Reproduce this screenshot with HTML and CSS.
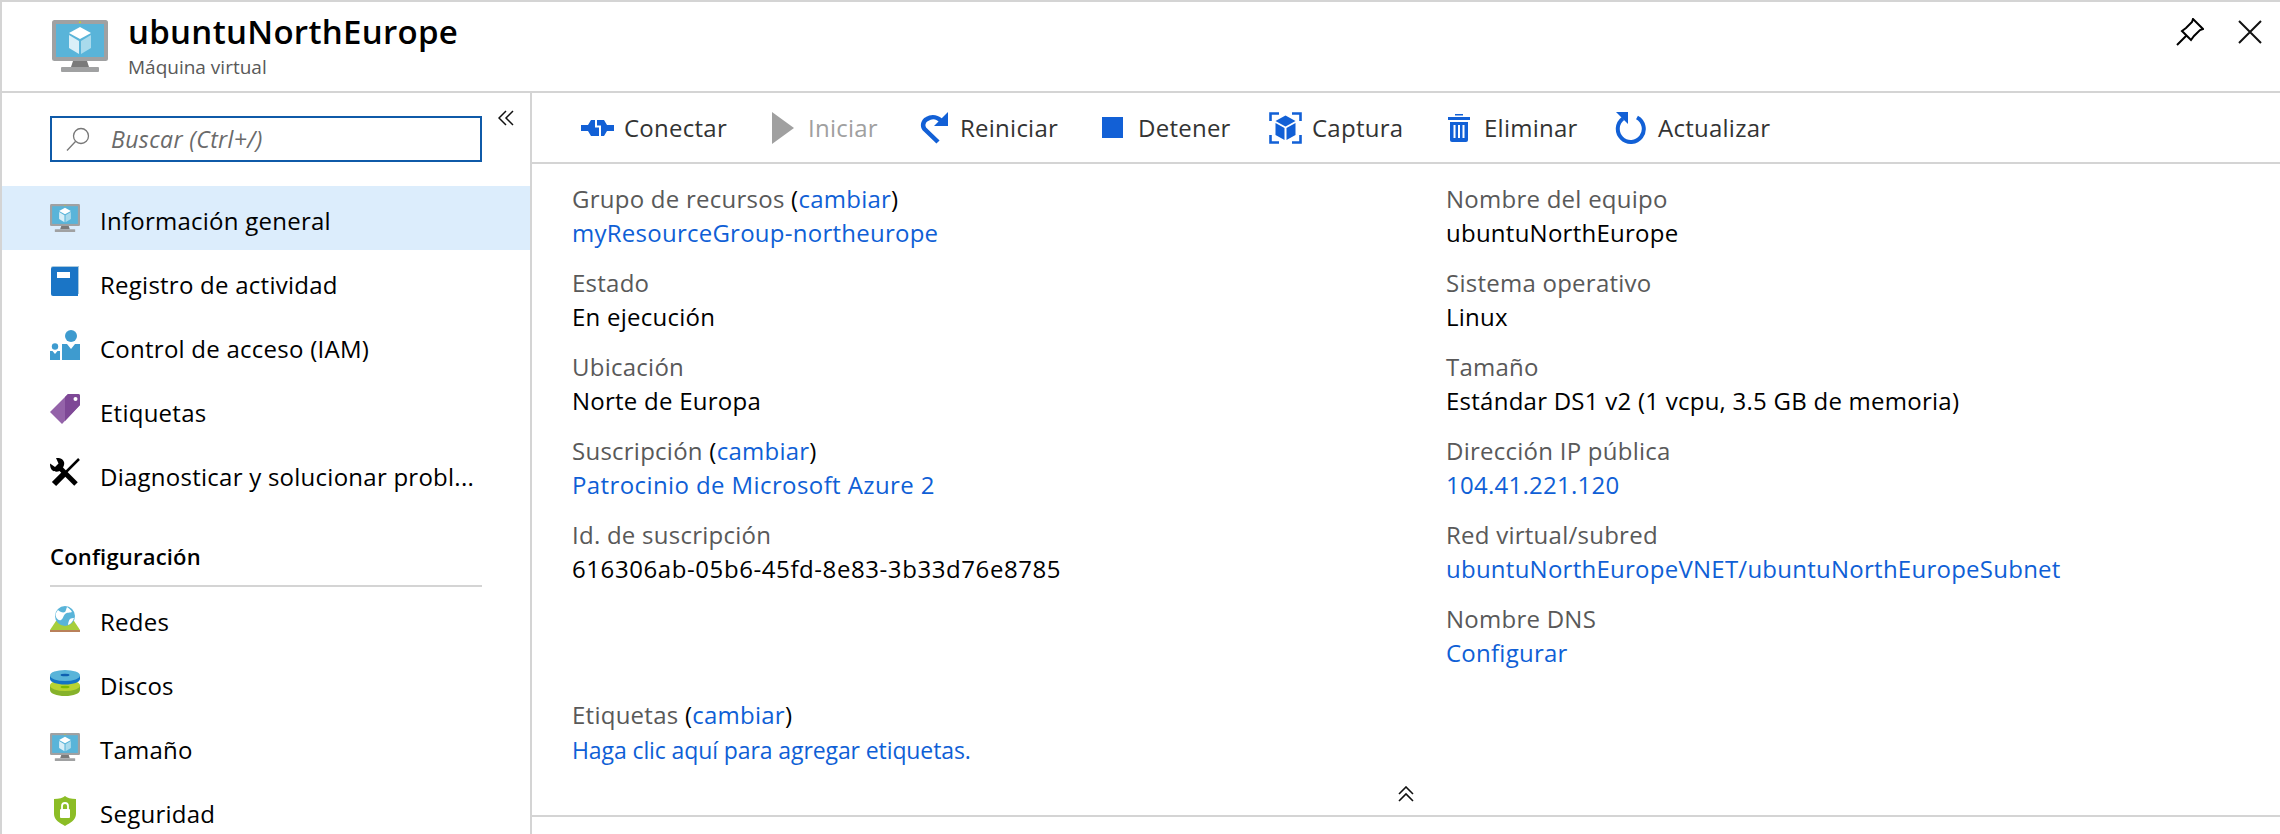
FILE: index.html
```html
<!DOCTYPE html>
<html lang="es">
<head>
<meta charset="utf-8">
<title>ubuntuNorthEurope</title>
<link rel="stylesheet" href="styles.css">
</head>
<body>
<svg class="defs" width="0" height="0" aria-hidden="true">
  <symbol id="vm" viewBox="0 0 56 52">
    <rect x="0" y="0" width="56" height="41" rx="2.5" fill="#a0a1a2"/>
    <rect x="4" y="4" width="48" height="33" fill="#59b4d9"/>
    <path d="M21 41h14l2 6H19z" fill="#7a7a7a"/>
    <rect x="9" y="47" width="38" height="5" rx="1" fill="#a0a1a2"/>
    <rect x="27" y="1.500" width="2" height="1.500" fill="#b8d432"/>
    <path d="M28 7l11 6-11 6-11-6z" fill="#fff"/>
    <path d="M17 15l10 6v13l-10-6z" fill="#d9eff8"/>
    <path d="M29 21l10-6v13l-10 6z" fill="#a9daec"/>
  </symbol>
  <symbol id="book" viewBox="0 0 30 30">
    <path d="M1 2a2 2 0 0 1 2-2h26v28H3a2 2 0 0 1-2-2z" fill="#a9c9dd"/>
    <path d="M1 3a2 2 0 0 1 2-2h25v29H3a2 2 0 0 1-2-2z" fill="#1a75c6"/>
    <rect x="7" y="6" width="13" height="6" fill="#fff"/>
  </symbol>
  <symbol id="iam" viewBox="0 0 30 30">
    <circle cx="21" cy="6" r="6" fill="#3e9bcf"/>
    <path d="M12 14h5l4 5 4-5h5v16H12z" fill="#3e9bcf"/>
    <circle cx="5" cy="16.500" r="3.200" fill="#3e9bcf"/>
    <path d="M0 21h2.500L5 24l2.500-3H10v9H0z" fill="#3e9bcf"/>
  </symbol>
  <symbol id="tag" viewBox="0 0 30 30">
    <path d="M0 18L18 0h10a2 2 0 0 1 2 2v9L12 30z" fill="#9463a9"/>
    <path d="M15 3L18 0h10a2 2 0 0 1 2 2v9L15 27z" fill="#7e4896"/>
    <circle cx="25.500" cy="5" r="2" fill="#fff"/>
  </symbol>
  <symbol id="tools" viewBox="0 0 30 30">
    <path d="M29 1L15 15" stroke="#000" stroke-width="2.500" fill="none"/>
    <path d="M15 15L4 26" stroke="#000" stroke-width="6" fill="none"/>
    <path d="M9 9l17 17" stroke="#000" stroke-width="5" fill="none"/>
    <path d="M6 0c4-.5 7 1 8 4 .5 2 0 4-1 5.500L9.500 13c-2 1-5 1-7-.5C.5 11 0 8 0 5.500l5 3.500 3.500-3.500z" fill="#000"/>
  </symbol>
  <symbol id="net" viewBox="0 0 30 26">
    <path d="M6 15h18l6 9H0z" fill="#a7ce3c"/>
    <rect x="0" y="24" width="30" height="2" fill="#b9805a"/>
    <circle cx="15" cy="10" r="10" fill="#59b4d9"/>
    <path d="M8 4c2 2 5 3 7 2 1-1 1-3 2-5 2 1 4 3 5 5-2 1-5 0-7 2s-2 5-4 6-4-1-5-3c-1-2 0-5 2-7zM20 13c1-1 3-1 4-1-1 3-3 6-6 7 0-2 1-5 2-6z" fill="#fff"/>
  </symbol>
  <symbol id="disk" viewBox="0 0 30 26">
    <path d="M0 15v5c0 3.500 6.500 6 15 6s15-2.500 15-6v-5z" fill="#86b22b"/>
    <ellipse cx="15" cy="15.500" rx="15" ry="5.500" fill="#b8d432"/>
    <ellipse cx="15" cy="17" rx="4.500" ry="1.300" fill="#7fba00"/>
    <path d="M0 6v3c0 3 6.500 5.500 15 5.500s15-2.500 15-5.500V6z" fill="#1474c4"/>
    <ellipse cx="15" cy="5.500" rx="15" ry="5.500" fill="#59b4d9"/>
    <ellipse cx="15" cy="5" rx="4.500" ry="1.300" fill="#0f5fb0"/>
  </symbol>
  <symbol id="shield" viewBox="0 0 22 30">
    <path d="M11 0c2 2 6 3 11 3v15c0 6-6 9-11 12C6 27 0 24 0 18V3c5 0 9-1 11-3z" fill="#8cbd26"/>
    <rect x="6" y="13" width="10" height="9" rx="1" fill="#fff"/>
    <path d="M8 13V10a3 3 0 0 1 6 0v3" fill="none" stroke="#fff" stroke-width="1.800"/>
  </symbol>
</svg>

<div class="blade">
  <header class="blade-head">
    <svg class="head-icon"><use href="#vm"/></svg>
    <div class="head-titles">
      <h1 class="head-title">ubuntuNorthEurope</h1>
      <p class="head-sub">Máquina virtual</p>
    </div>
    <div class="head-actions">
      <svg class="pin" viewBox="0 0 28 28"><path d="M1 27l9-9M6 13l4-3 6-6 1-3 10 10-3 1-6 6-3 4z" fill="none" stroke="#000" stroke-width="2" stroke-linejoin="miter"/></svg>
      <svg class="close" viewBox="0 0 24 24"><path d="M1 1l22 22M23 1L1 23" fill="none" stroke="#111" stroke-width="2"/></svg>
    </div>
  </header>

  <div class="blade-body">
    <aside class="sidebar">
      <div class="search">
        <svg class="search-icon" viewBox="0 0 24 24"><circle cx="15" cy="9" r="7.500" fill="none" stroke="#777" stroke-width="1.300"/><path d="M9.500 14.500L1 23.500" stroke="#777" stroke-width="1.300"/></svg>
        <span class="search-text">Buscar (Ctrl+/)</span>
      </div>
      <svg class="collapse" viewBox="0 0 16 16"><path d="M8 1L1 8l7 7M15 1L8 8l7 7" fill="none" stroke="#111" stroke-width="1.500"/></svg>
      <nav class="nav">
        <a class="nav-item active"><svg class="nav-icon"><use href="#vm"/></svg><span>Información general</span></a>
        <a class="nav-item"><svg class="nav-icon nudge-up"><use href="#book"/></svg><span>Registro de actividad</span></a>
        <a class="nav-item"><svg class="nav-icon nudge-up"><use href="#iam"/></svg><span>Control de acceso (IAM)</span></a>
        <a class="nav-item"><svg class="nav-icon nudge-up"><use href="#tag"/></svg><span>Etiquetas</span></a>
        <a class="nav-item"><svg class="nav-icon nudge-up"><use href="#tools"/></svg><span>Diagnosticar y solucionar probl...</span></a>
        <div class="nav-section"><span>Configuración</span></div>
        <a class="nav-item"><svg class="nav-icon"><use href="#net"/></svg><span>Redes</span></a>
        <a class="nav-item"><svg class="nav-icon"><use href="#disk"/></svg><span>Discos</span></a>
        <a class="nav-item"><svg class="nav-icon"><use href="#vm"/></svg><span>Tamaño</span></a>
        <a class="nav-item"><svg class="nav-icon"><use href="#shield"/></svg><span>Seguridad</span></a>
      </nav>
    </aside>

    <main class="main">
      <div class="toolbar">
        <a class="tool t-connect"><svg class="ti" width="33" height="16" viewBox="0 0 33 16"><path d="M0 5h7l3-5h13l3 5h7v6h-7l-3 5H10l-3-5H0z" fill="#1260d6"/><path d="M15 0v6.500h4V16" fill="none" stroke="#fff" stroke-width="2"/></svg><span>Conectar</span></a>
        <a class="tool disabled t-start"><svg class="ti" width="22" height="32" viewBox="0 0 22 32"><path d="M0 0l22 16L0 32z" fill="#a0a0a0"/></svg><span>Iniciar</span></a>
        <a class="tool t-restart"><svg class="ti" width="28" height="32" viewBox="0 0 28 32"><path d="M18 30L4.500 17C2 14 3 9 7 7c5-3 11-2 15 3" fill="none" stroke="#1260d6" stroke-width="4.500"/><path d="M28 0v14H14z" fill="#1260d6"/></svg><span>Reiniciar</span></a>
        <a class="tool t-stop"><span class="stop-square"></span><span>Detener</span></a>
        <a class="tool t-capture"><svg class="ti" width="33" height="32" viewBox="0 0 33 32"><path d="M1.500 9V1.500H10M23 1.500h8.500V9M31.500 23v7.500H23M10 30.500H1.500V23" fill="none" stroke="#1260d6" stroke-width="2.600"/><path d="M16.500 3.500l10 5.500-10 5.500-10-5.500z" fill="#1260d6"/><path d="M6.500 11l9 5v12l-9-5zM26.500 11l-9 5v12l9-5z" fill="#1260d6"/></svg><span>Captura</span></a>
        <a class="tool t-delete"><svg class="ti" width="22" height="28" viewBox="0 0 22 28"><path d="M7 0h8v1.500H7zM0 3h22v3H0z" fill="#1260d6"/><path d="M2 8h18v18a2 2 0 0 1-2 2H4a2 2 0 0 1-2-2z" fill="#1260d6"/><path d="M6.500 11v13M11 11v13M15.500 11v13" stroke="#fff" stroke-width="2"/></svg><span>Eliminar</span></a>
        <a class="tool t-refresh"><svg class="ti" width="31" height="32" viewBox="0 0 31 32"><path d="M22 5.500a13 13 0 1 1-14 1" fill="none" stroke="#1260d6" stroke-width="4"/><path d="M1 0h12v12z" fill="#1260d6"/></svg><span>Actualizar</span></a>
      </div>

      <section class="essentials">
        <div class="columns">
          <dl class="col">
            <div class="field"><dt class="label">Grupo de recursos <span class="plain">(<a class="link">cambiar</a>)</span></dt><dd class="value"><a class="link">myResourceGroup-northeurope</a></dd></div>
            <div class="field"><dt class="label">Estado</dt><dd class="value">En ejecución</dd></div>
            <div class="field"><dt class="label">Ubicación</dt><dd class="value">Norte de Europa</dd></div>
            <div class="field"><dt class="label">Suscripción <span class="plain">(<a class="link">cambiar</a>)</span></dt><dd class="value"><a class="link wide">Patrocinio de Microsoft Azure 2</a></dd></div>
            <div class="field"><dt class="label">Id. de suscripción</dt><dd class="value guid">616306ab-05b6-45fd-8e83-3b33d76e8785</dd></div>
          </dl>
          <dl class="col">
            <div class="field"><dt class="label">Nombre del equipo</dt><dd class="value">ubuntuNorthEurope</dd></div>
            <div class="field"><dt class="label">Sistema operativo</dt><dd class="value">Linux</dd></div>
            <div class="field"><dt class="label">Tamaño</dt><dd class="value">Estándar DS1 v2 (1 vcpu, 3.5 GB de memoria)</dd></div>
            <div class="field"><dt class="label">Dirección IP pública</dt><dd class="value"><a class="link">104.41.221.120</a></dd></div>
            <div class="field"><dt class="label">Red virtual/subred</dt><dd class="value"><a class="link">ubuntuNorthEuropeVNET/ubuntuNorthEuropeSubnet</a></dd></div>
            <div class="field"><dt class="label">Nombre DNS</dt><dd class="value"><a class="link">Configurar</a></dd></div>
          </dl>
        </div>
        <div class="tags">
          <div class="label">Etiquetas <span class="plain">(<a class="link">cambiar</a>)</span></div>
          <div class="value small"><a class="link">Haga clic aquí para agregar etiquetas.</a></div>
        </div>
        <div class="fold">
          <svg class="fold-icon" viewBox="0 0 16 16"><path d="M1 8l7-7 7 7M1 15l7-7 7 7" fill="none" stroke="#111" stroke-width="1.600"/></svg>
        </div>
      </section>
    </main>
  </div>
</div>
</body>
</html>
```
FILE: styles.css
```css
* { box-sizing: border-box; }
html, body { margin: 0; padding: 0; background: #fff; }
body {
  font-family: "Open Sans", "Noto Sans", sans-serif;
  color: #000;
  overflow: hidden;
}
.defs { position: absolute; }
.blade {
  height: 834px;
  overflow: hidden;
  border-top: 2px solid #d4d4d4;
  border-left: 2px solid #d4d4d4;
  display: flex;
  flex-direction: column;
}
.blade-head {
  height: 91px;
  flex: none;
  border-bottom: 2px solid #d4d4d4;
  display: flex;
  align-items: flex-start;
  padding-left: 50px;
}
.head-icon { width: 56px; height: 52px; margin-top: 18px; flex: none; }
.head-titles { margin-left: 20px; padding-top: 8px; }
.head-title {
  margin: 0;
  font-size: 33px;
  line-height: 44px;
  font-weight: 600;
  letter-spacing: 0.3px;
}
.head-sub {
  margin: 0;
  font-size: 19px;
  line-height: 26px;
  color: #595959;
}
.head-actions {
  margin-left: auto;
  display: flex;
  align-items: flex-start;
  gap: 34px;
  padding: 16px 18px 0 0;
}
.pin { width: 28px; height: 28px; }
.close { width: 24px; height: 24px; margin-top: 2px; }

.blade-body { flex: 1; display: flex; min-height: 0; }
.sidebar {
  width: 530px;
  flex: none;
  border-right: 2px solid #d4d4d4;
  position: relative;
}
.search {
  margin: 23px 48px 0;
  height: 46px;
  border: 2px solid #0f5aa8;
  display: flex;
  align-items: center;
  padding-left: 14px;
  width: 432px;
}
.search-icon { width: 24px; height: 24px; flex: none; }
.search-text {
  margin-left: 21px;
  font-size: 23px;
  font-style: italic;
  color: #6a6a6a;
  letter-spacing: 0.4px;
}
.collapse { position: absolute; left: 496px; top: 17px; width: 16px; height: 16px; }
.nav { margin-top: 24px; }
.nav-item {
  height: 64px;
  display: flex;
  align-items: center;
  padding-left: 48px;
  font-size: 24px;
  letter-spacing: 0.25px;
}
.nav-item > span { padding-top: 4px; }
.nav-item.active { background: #dcedfc; }
.nav-icon { width: 30px; height: 30px; flex: none; margin-right: 20px; }
.nudge-up { margin-bottom: 2px; }
.nav-section {
  height: 81px;
  margin: 0 48px;
  width: 432px;
  border-bottom: 2px solid #d4d4d4;
  font-size: 22px;
  font-weight: 600;
  letter-spacing: 0.2px;
  display: flex;
  align-items: flex-end;
  padding-bottom: 14px;
}
.main { flex: 1; min-width: 0; }
.toolbar {
  height: 71px;
  border-bottom: 2px solid #d4d4d4;
  display: flex;
  align-items: center;
  padding-left: 49px;
}
.tool {
  display: flex;
  align-items: center;
  font-size: 24px;
  letter-spacing: 0.25px;
  color: #333;
}
.tool.disabled { color: #a0a0a0; }
.ti { flex: none; }
.t-connect { width: 191px; }
.t-connect .ti { margin-right: 10px; }
.t-start { width: 148px; }
.t-start .ti { margin-right: 14px; }
.t-restart { width: 182px; }
.t-restart .ti { margin-right: 12px; }
.t-stop { width: 167px; }
.stop-square { width: 21px; height: 21px; background: #1260d6; margin-right: 15px; flex: none; }
.t-capture { width: 179px; }
.t-capture .ti { margin-right: 10px; }
.t-delete { width: 167px; }
.t-delete .ti { margin-right: 14px; }
.t-refresh .ti { margin-right: 12px; }

.essentials { padding: 18px 0 0 40px; }
.columns { display: grid; grid-template-columns: 874px 1fr; }
.col { margin: 0; }
.field { margin-bottom: 16px; }
.label {
  font-size: 24px;
  line-height: 34px;
  color: #595959;
  letter-spacing: 0.25px;
}
.plain { color: #000; }
.value {
  margin: 0;
  font-size: 24px;
  line-height: 34px;
  letter-spacing: 0.25px;
}
.value.guid { letter-spacing: 0.58px; }
.value.small { font-size: 23px; line-height: 36px; letter-spacing: -0.1px; }
.link { color: #0f5fd6; }
.link.wide { letter-spacing: 0.4px; }
.tags { margin-top: 12px; }
.fold {
  margin: 18px 0 0 -40px;
  display: flex;
  justify-content: center;
  padding-bottom: 13px;
  border-bottom: 2px solid #d4d4d4;
}
.fold-icon { width: 16px; height: 16px; }
```
